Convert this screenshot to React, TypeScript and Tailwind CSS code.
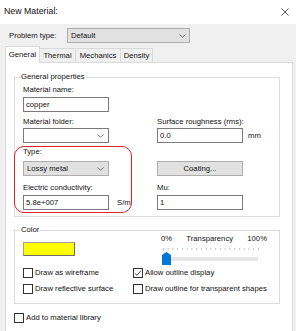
import React from 'react'

function Chevron() {
  return (
    <svg width="7" height="4" viewBox="0 0 7 4" className="shrink-0">
      <path d="M0.5 0.5 L3.5 3.2 L6.5 0.5" stroke="#606060" strokeWidth="0.9" fill="none" />
    </svg>
  )
}

function Box({ checked }: { checked?: boolean }) {
  return (
    <span className="w-[10px] h-[10px] border border-[#333] bg-white flex items-center justify-center shrink-0">
      {checked && (
        <svg width="8" height="8" viewBox="0 0 8 8">
          <path d="M1 4.2 L3 6.3 L7 1.6" stroke="#333" strokeWidth="0.9" fill="none" />
        </svg>
      )}
    </span>
  )
}

function Check({ label, checked }: { label: string; checked?: boolean }) {
  return (
    <div className="flex items-center gap-[2px] h-[10px]">
      <Box checked={checked} />
      <span className="leading-[10px]">{label}</span>
    </div>
  )
}

function Label({ children }: { children: React.ReactNode }) {
  return <div className="h-[10px] leading-[10px]">{children}</div>
}

function Input({ value }: { value: string }) {
  return (
    <div className="w-[86px] h-[15px] border border-[#7a7a7a] bg-white flex items-center pl-[2px]">{value}</div>
  )
}

function Group({ title, className, children }: { title: string; className: string; children: React.ReactNode }) {
  return (
    <div className={'relative border border-[#dcdcdc] ' + className}>
      <span className="absolute left-[5px] top-[-6px] bg-white px-[1px] leading-[10px]">{title}</span>
      {children}
    </div>
  )
}

export default function App() {
  const ticks = Array.from({ length: 21 }, (_, i) => 2 + i * 4.75)
  return (
    <div className="w-[296px] h-[331px] overflow-hidden bg-[#f0f0f0] flex flex-col text-[7.7px] text-[#111] font-['Liberation_Sans',Arial,sans-serif]">
      {/* title bar */}
      <div className="h-[24px] bg-white flex items-center justify-between pl-[4px] pr-[7px] shrink-0">
        <span className="text-[8.8px]">New Material:</span>
        <svg width="8" height="8" viewBox="0 0 8 8">
          <path d="M0.5 0.5 L7.5 7.5 M7.5 0.5 L0.5 7.5" stroke="#333" strokeWidth="0.8" />
        </svg>
      </div>

      {/* problem type */}
      <div className="mt-[4px] h-[15px] flex items-center pl-[9px] shrink-0">
        <span className="w-[58px]">Problem type:</span>
        <div className="w-[123px] h-[15px] border border-[#adadad] bg-[#e1e1e1] flex items-center justify-between pl-[3px] pr-[3px]">
          <span>Default</span>
          <Chevron />
        </div>
      </div>

      {/* tabs */}
      <div className="mt-[3px] h-[16px] flex items-end pl-[5px] shrink-0">
        <div className="relative z-10 mb-[-1px] w-[35px] h-[17px] bg-white border border-b-0 border-[#d9d9d9] flex items-center justify-center">
          General
        </div>
        <div className="w-[36px] h-[14px] border-t border-r border-[#d9d9d9] flex items-center justify-center">Thermal</div>
        <div className="w-[45px] h-[14px] border-t border-r border-[#d9d9d9] flex items-center justify-center">Mechanics</div>
        <div className="w-[32px] h-[14px] border-t border-r border-[#d9d9d9] flex items-center justify-center">Density</div>
      </div>

      {/* panel */}
      <div className="ml-[5px] w-[288px] flex-1 bg-white border border-b-0 border-[#d9d9d9] pl-[8px] pt-[14px]">
        <Group title="General properties" className="w-[266px] h-[140px] pl-[8px] pt-[7px]">
          <div className="flex">
            <div className="w-[134px]">
              <Label>Material name:</Label>
              <div className="mt-[2px]">
                <Input value="copper" />
              </div>
            </div>
          </div>
          <div className="flex mt-[5px]">
            <div className="w-[134px]">
              <Label>Material folder:</Label>
              <div className="mt-[1px] w-[86px] h-[15px] border border-[#7a7a7a] bg-white flex items-center justify-end pr-[4px]">
                <Chevron />
              </div>
            </div>
            <div className="flex flex-col">
              <Label>Surface roughness (rms):</Label>
              <div className="mt-[1px] flex items-center">
                <Input value="0.0" />
                <span className="ml-[5px]">mm</span>
              </div>
            </div>
          </div>
          <div className="flex mt-[4px]">
            <div className="w-[134px]">
              <Label>Type:</Label>
              <div className="mt-[4px] w-[86px] h-[15px] border border-[#adadad] bg-[#e1e1e1] flex items-center justify-between pl-[3px] pr-[4px]">
                <span>Lossy metal</span>
                <Chevron />
              </div>
            </div>
            <div className="pt-[14px]">
              <div className="w-[86px] h-[15px] border border-[#adadad] bg-[#e1e1e1] flex items-center justify-center">
                Coating...
              </div>
            </div>
          </div>
          <div className="flex mt-[7px]">
            <div className="w-[134px]">
              <Label>Electric conductivity:</Label>
              <div className="mt-[2px] flex items-center">
                <Input value="5.8e+007" />
                <span className="ml-[8px]">S/m</span>
              </div>
            </div>
            <div>
              <Label>Mu:</Label>
              <div className="mt-[2px]">
                <Input value="1" />
              </div>
            </div>
          </div>
          {/* red highlight annotation */}
          <div className="absolute left-[-1px] top-[68px] w-[118px] h-[67px] border-[1.5px] border-[#e0202a] rounded-[10px] pointer-events-none" />
        </Group>

        <Group title="Color" className="mt-[13px] w-[266px] h-[74px]">
          <div className="flex">
            <div className="w-[146px] pl-[8px] pt-[11px]">
              <div className="w-[52px] h-[14px] bg-[#ffff00] border border-[#a0a0a0] border-r-[#6d6d6d] border-b-[#6d6d6d]" />
            </div>
            <div className="w-[106px] pt-[3px]">
              <div className="h-[10px] leading-[10px] flex justify-between">
                <span>0%</span>
                <span>Transparency</span>
                <span>100%</span>
              </div>
              <svg width="100" height="3" className="mt-[4px] block">
                {ticks.map((x) => (
                  <rect key={x} x={x} y="0" width="0.8" height="2" fill="#b9b9b9" />
                ))}
              </svg>
              <div className="relative mt-[1px] h-[13px] w-[100px]">
                <div className="absolute left-[2px] top-[5px] w-[95px] h-[4px] bg-[#e7e7e7]" />
                <svg width="9" height="13" viewBox="0 0 9 13" className="absolute left-[1px] top-0">
                  <path d="M4.5 0 L9 3 L9 13 L0 13 L0 3 Z" fill="#0078d7" />
                </svg>
              </div>
            </div>
          </div>
          <div className="mt-[3px] pl-[8px] flex flex-col gap-[6px]">
            <div className="flex">
              <div className="w-[110px]">
                <Check label="Draw as wireframe" />
              </div>
              <Check label="Allow outline display" checked />
            </div>
            <div className="flex">
              <div className="w-[110px]">
                <Check label="Draw reflective surface" />
              </div>
              <Check label="Draw outline for transparent shapes" />
            </div>
          </div>
        </Group>

        <div className="mt-[9px]">
          <Check label="Add to material library" />
        </div>
      </div>
    </div>
  )
}
